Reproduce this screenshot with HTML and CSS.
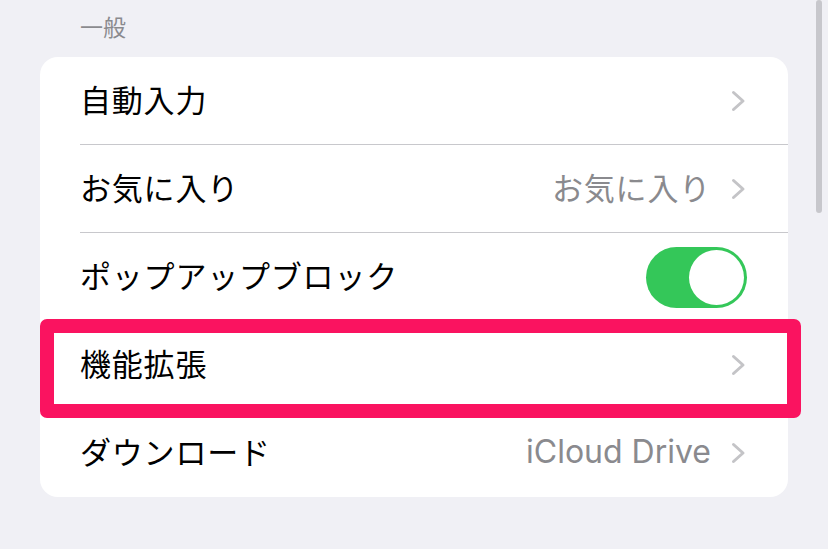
FILE: index.html
```html
<!DOCTYPE html>
<html lang="ja">
<head>
<meta charset="utf-8">
<link rel="stylesheet" href="styles.css">
</head>
<body>
<div class="page">
  <div class="section-title">一般</div>
  <div class="card">
    <div class="row">
      <span class="label">自動入力</span>
      <span class="right"><span class="chev"><svg width="15" height="22" viewBox="0 0 15 22"><path d="M2.5 2.5 L12 11 L2.5 19.5" fill="none" stroke="#c4c4c7" stroke-width="3" stroke-linecap="round" stroke-linejoin="round"/></svg></span></span>
    </div>
    <div class="row">
      <span class="label">お気に入り</span>
      <span class="right"><span class="value">お気に入り</span><span class="chev"><svg width="15" height="22" viewBox="0 0 15 22"><path d="M2.5 2.5 L12 11 L2.5 19.5" fill="none" stroke="#c4c4c7" stroke-width="3" stroke-linecap="round" stroke-linejoin="round"/></svg></span></span>
    </div>
    <div class="row">
      <span class="label">ポップアップブロック</span>
      <span class="right"><span class="toggle"><span class="knob"></span></span></span>
    </div>
    <div class="row row-hl">
      <span class="label">機能拡張</span>
      <span class="right"><span class="chev"><svg width="15" height="22" viewBox="0 0 15 22"><path d="M2.5 2.5 L12 11 L2.5 19.5" fill="none" stroke="#c4c4c7" stroke-width="3" stroke-linecap="round" stroke-linejoin="round"/></svg></span></span>
      <div class="highlight"></div>
    </div>
    <div class="row last">
      <span class="label">ダウンロード</span>
      <span class="right"><span class="value latin">iCloud Drive</span><span class="chev"><svg width="15" height="22" viewBox="0 0 15 22"><path d="M2.5 2.5 L12 11 L2.5 19.5" fill="none" stroke="#c4c4c7" stroke-width="3" stroke-linecap="round" stroke-linejoin="round"/></svg></span></span>
    </div>
  </div>
  <div class="scrollbar"></div>
</div>
</body>
</html>
```
FILE: styles.css
```css
html, body {
  margin: 0;
  padding: 0;
  background: #f0f0f5;
}
body {
  font-family: "Noto Sans CJK JP", "Noto Sans", sans-serif;
  color: #000;
  width: 828px;
  height: 549px;
  overflow: hidden;
}
.page {
  position: relative;
  padding-top: 10px;
}
.section-title {
  padding-left: 80px;
  font-size: 23px;
  line-height: 32px;
  color: #8a8a8e;
  height: 47px;
}
.card {
  margin-left: 40px;
  width: 748px;
  background: #fff;
  border-radius: 18px;
}
.row {
  position: relative;
  height: 88px;
  display: flex;
  align-items: center;
  justify-content: space-between;
  padding-left: 40px;
  padding-right: 42px;
  box-sizing: border-box;
}
.row::after {
  content: "";
  position: absolute;
  left: 40px;
  right: 0;
  bottom: 0;
  height: 1px;
  background: #c8c8cc;
}
.row.last::after,
.row-hl::after {
  display: none;
}
.label {
  font-size: 31px;
  line-height: 40px;
  letter-spacing: 0.8px;
  margin-bottom: 4px;
}
.right {
  display: flex;
  align-items: center;
  gap: 20px;
}
.value {
  font-size: 31px;
  line-height: 40px;
  color: #8a8a8e;
  letter-spacing: 0.8px;
  margin-bottom: 4px;
}
.value.latin {
  font-family: "Inter", "Roboto", sans-serif;
  font-size: 32px;
  letter-spacing: 0;
  margin-bottom: 2px;
}
.chev {
  display: flex;
  width: 15px;
  height: 22px;
}
.toggle {
  width: 101px;
  height: 61px;
  border-radius: 31px;
  background: #34c759;
  display: flex;
  align-items: center;
  justify-content: flex-end;
  padding-right: 3px;
  box-sizing: border-box;
  margin-right: -1px;
}
.knob {
  width: 55px;
  height: 55px;
  border-radius: 50%;
  background: #fff;
}
.highlight {
  position: absolute;
  left: 0;
  top: -2px;
  right: -13px;
  bottom: -9px;
  border: 14px solid #fa1360;
  border-radius: 7px;
}
.scrollbar {
  position: absolute;
  left: 816px;
  top: 0;
  width: 6px;
  height: 213px;
  border-radius: 3px;
  background: #c7c7cc;
}
```
